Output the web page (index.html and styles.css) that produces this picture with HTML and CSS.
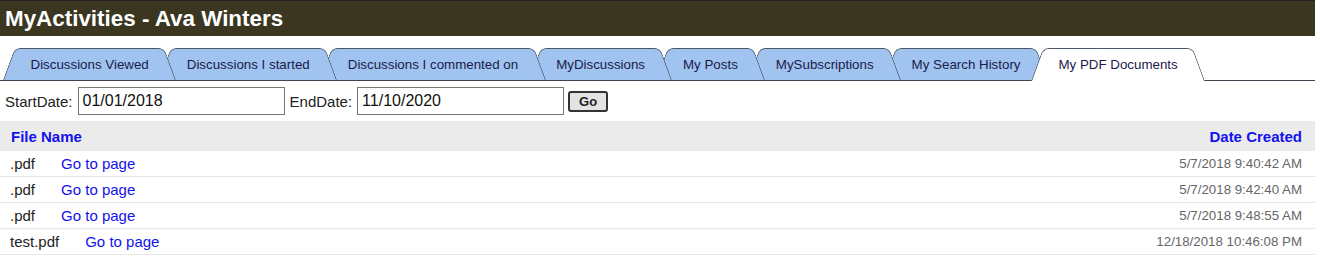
FILE: index.html
```html
<!DOCTYPE html>
<html lang="en">
<head>
  <meta charset="UTF-8" />
  <title>MyActivities - Ava Winters</title>
  <link rel="stylesheet" href="styles.css">
</head>
<body>
  <div class="page">
    <div class="title-bar">MyActivities - Ava Winters</div>

    <div class="tabs">
      <a class="tab" style="z-index: 8">Discussions Viewed</a>
      <a class="tab" style="z-index: 7">Discussions I started</a>
      <a class="tab" style="z-index: 6">Discussions I commented on</a>
      <a class="tab" style="z-index: 5">MyDiscussions</a>
      <a class="tab" style="z-index: 4">My Posts</a>
      <a class="tab" style="z-index: 3">MySubscriptions</a>
      <a class="tab" style="z-index: 2">My Search History</a>
      <a class="tab active">My PDF Documents</a>
    </div>

    <div class="filter">
      <label>StartDate:</label>
      <input type="text" class="date-input" value="01/01/2018">
      <label>EndDate:</label>
      <input type="text" class="date-input" value="11/10/2020">
      <button class="go-btn">Go</button>
    </div>

    <table class="docs">
      <thead>
        <tr>
          <th class="name-col">File Name</th>
          <th class="date-col">Date Created</th>
        </tr>
      </thead>
      <tbody>
        <tr>
          <td class="name-col"><span class="file">.pdf</span><a class="page-link">Go to page</a></td>
          <td class="date-col">5/7/2018 9:40:42 AM</td>
        </tr>
        <tr>
          <td class="name-col"><span class="file">.pdf</span><a class="page-link">Go to page</a></td>
          <td class="date-col">5/7/2018 9:42:40 AM</td>
        </tr>
        <tr>
          <td class="name-col"><span class="file">.pdf</span><a class="page-link">Go to page</a></td>
          <td class="date-col">5/7/2018 9:48:55 AM</td>
        </tr>
        <tr>
          <td class="name-col"><span class="file">test.pdf</span><a class="page-link">Go to page</a></td>
          <td class="date-col">12/18/2018 10:46:08 PM</td>
        </tr>
      </tbody>
    </table>
  </div>
</body>
</html>
```

FILE: styles.css
```css
body {
  margin: 0;
  font-family: 'Liberation Sans', Arial, sans-serif;
  background: #fff;
  color: #222;
}

.page {
  width: 1315px;
}

.title-bar {
  height: 35px;
  line-height: 35px;
  padding-left: 5px;
  border-top: 1px solid #222;
  background-color: #3a3620;
  color: #fff;
  font-size: 22.4px;
  font-weight: bold;
}

.tabs {
  display: flex;
  align-items: flex-end;
  height: 33px;
  margin-top: 11px;
  padding-left: 3px;
  border-bottom: 1px solid #3c4650;
}

.tab {
  position: relative;
  height: 32px;
  line-height: 33px;
  padding: 0 27.5px;
  margin-left: -17px;
  font-size: 13.33px;
  color: #1a1a4a;
  cursor: pointer;
  white-space: nowrap;
}

.tab:first-child {
  margin-left: 0;
}

.tab::before,
.tab::after {
  content: '';
  position: absolute;
  top: 0;
  bottom: 0;
  width: 55%;
  background-color: #a0c4ef;
  border-top: 1.5px solid #4b5866;
  z-index: -1;
}

.tab::before {
  left: 0;
  border-left: 1.5px solid #4b5866;
  border-top-left-radius: 6px;
  transform-origin: bottom left;
  transform: skewX(-20deg);
}

.tab::after {
  right: 0;
  border-right: 1.5px solid #4b5866;
  border-top-right-radius: 6px;
  transform-origin: bottom right;
  transform: skewX(20deg);
}

.tab.active {
  z-index: 10;
  height: 33px;
  margin-bottom: -1px;
}

.tab.active::before,
.tab.active::after {
  background-color: #fff;
}

.filter {
  display: flex;
  align-items: center;
  gap: 5px;
  height: 28px;
  margin-top: 6px;
  padding-left: 5px;
  font-size: 15px;
}

.date-input {
  box-sizing: border-box;
  width: 207px;
  height: 28px;
  margin: 0;
  padding: 0 4px;
  border: 1px solid #767676;
  font-family: 'Liberation Sans', Arial, sans-serif;
  font-size: 16px;
  color: #111;
}

.go-btn {
  width: 40px;
  height: 21px;
  margin-left: -1px;
  padding: 0;
  border: 2px solid #333;
  border-radius: 3px;
  background-color: #e3e3e3;
  font-family: 'Liberation Sans', Arial, sans-serif;
  font-size: 13px;
  font-weight: bold;
  color: #222;
}

.docs {
  width: 100%;
  margin-top: 6px;
  border-collapse: collapse;
}

.docs th {
  height: 30px;
  padding: 0;
  background-color: #ebebeb;
  color: #1212ee;
  font-size: 15px;
  font-weight: bold;
}

.docs td {
  height: 25px;
  padding: 0;
  border-bottom: 1px solid #e6e6e6;
  font-size: 15px;
}

.name-col {
  text-align: left;
  padding-left: 10px !important;
}

.docs th.name-col {
  padding-left: 11px !important;
}

.date-col {
  text-align: right;
  padding-right: 13px !important;
}

.docs td.date-col {
  font-size: 13.3px;
  color: #666;
}

.file {
  margin-right: 26px;
}

.page-link {
  color: #1212ee;
  cursor: pointer;
}
```
